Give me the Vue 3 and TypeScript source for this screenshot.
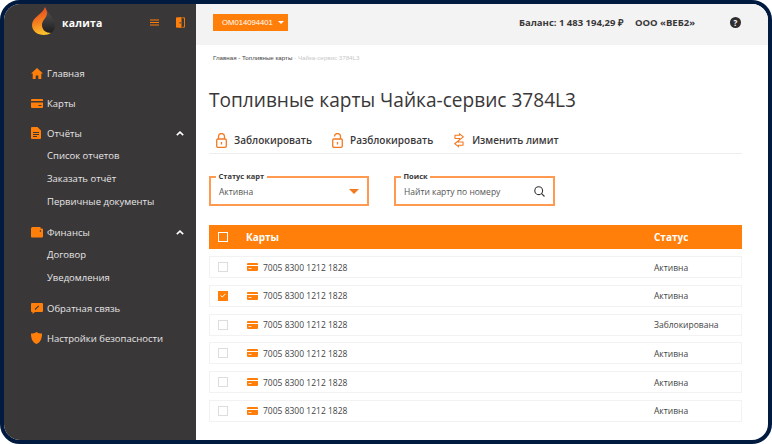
<script setup lang="ts">
interface MenuItem {
    label: string;
    icon: string;
    open?: boolean;
    children?: string[];
}

const menu: MenuItem[] = [
    { label: 'Главная', icon: 'home' },
    { label: 'Карты', icon: 'card' },
    { label: 'Отчёты', icon: 'doc', open: true, children: ['Список отчетов', 'Заказать отчёт', 'Первичные документы'] },
    { label: 'Финансы', icon: 'wallet', open: true, children: ['Договор', 'Уведомления'] },
    { label: 'Обратная связь', icon: 'chat' },
    { label: 'Настройки безопасности', icon: 'shield' },
];

const rows = [
    { status: 'Активна', checked: false },
    { status: 'Активна', checked: true },
    { status: 'Заблокирована', checked: false },
    { status: 'Активна', checked: false },
    { status: 'Активна', checked: false },
    { status: 'Активна', checked: false },
];
</script>

<template>
    <div class="frame">
        <aside class="sidebar">
            <div class="brand">
                <svg class="flame" width="24" height="28" viewBox="0 0 24 28">
                    <defs>
                        <linearGradient id="fl" x1="0.3" y1="0" x2="0.5" y2="1">
                            <stop offset="0" stop-color="#e8401c" />
                            <stop offset="0.55" stop-color="#f58220" />
                            <stop offset="1" stop-color="#fdc52c" />
                        </linearGradient>
                        <linearGradient id="fd" x1="0.5" y1="0" x2="0.5" y2="1">
                            <stop offset="0" stop-color="#5a5758" />
                            <stop offset="1" stop-color="#1c1a1b" />
                        </linearGradient>
                    </defs>
                    <path d="M13 0C14 5 23 10 23 19C23 24 18 28 12 28C5 28 0 24 0 18C0 10 11 7 13 0Z" fill="url(#fd)" />
                    <path d="M13 0C11 7 0 10 0 18C0 24 5 28 12 28C15 28 17 27 19 26C14 26 10 23 10 18C10 13 15 11 15 6C15 4 14 2 13 0Z" fill="url(#fl)" />
                </svg>
                <span class="brand-name">калита</span>
                <svg class="burger" width="9" height="7" viewBox="0 0 9 7"><path d="M0 1h9M0 3.500h9M0 6h9" stroke="#ff7f0a" stroke-width="1" /></svg>
                <svg class="door" width="9" height="11" viewBox="0 0 9 11">
                    <path d="M0 0.500 5.500 0V11L0 10.500Z" fill="#ff7f0a" />
                    <path d="M6.300 0.800H8.500V10.200H6.300" fill="none" stroke="#ff7f0a" stroke-width="0.900" />
                    <rect x="3.600" y="5" width="1" height="1.600" fill="#3a3739" />
                </svg>
            </div>

            <nav class="menu">
                <div v-for="item in menu" :key="item.label" class="menu-group">
                    <div class="menu-item">
                        <span class="menu-icon">
                            <svg v-if="item.icon === 'home'" width="12" height="11" viewBox="0 0 12 11"><path d="M6 0 12 5.500H10.300V11H7.300V7.500H4.700V11H1.700V5.500H0Z" fill="#ff7f0a" /></svg>
                            <svg v-else-if="item.icon === 'card'" width="12" height="9" viewBox="0 0 12 9"><path d="M1 0H11A1 1 0 0 1 12 1V2H0V1A1 1 0 0 1 1 0ZM0 3.500H12V8A1 1 0 0 1 11 9H1A1 1 0 0 1 0 8ZM7.500 6V7H10.500V6Z" fill="#ff7f0a" fill-rule="evenodd" /></svg>
                            <svg v-else-if="item.icon === 'doc'" width="10" height="12" viewBox="0 0 10 12"><path d="M1 0H6.500L10 3.500V11A1 1 0 0 1 9 12H1A1 1 0 0 1 0 11V1A1 1 0 0 1 1 0ZM2 5V6H8V5ZM2 7V8H8V7ZM2 9V10H6V9Z" fill="#ff7f0a" fill-rule="evenodd" /></svg>
                            <svg v-else-if="item.icon === 'wallet'" width="12" height="11" viewBox="0 0 12 11"><path d="M1.500 0H9.500V1.500H11A1 1 0 0 1 12 2.500V9.500A1 1 0 0 1 11 10.500H1A1 1 0 0 1 0 9.500V1.500A1.500 1.500 0 0 1 1.500 0ZM8.800 3.200V4.800H10V3.200Z" fill="#ff7f0a" fill-rule="evenodd" /></svg>
                            <svg v-else-if="item.icon === 'chat'" width="12" height="11" viewBox="0 0 12 11"><path d="M1 0H11A1 1 0 0 1 12 1V8A1 1 0 0 1 11 9H4L1.500 11V9H1A1 1 0 0 1 0 8V1A1 1 0 0 1 1 0Z" fill="#ff7f0a" /><path d="M4 6.500 7.800 2.800" stroke="#3a3739" stroke-width="1.100" /></svg>
                            <svg v-else width="11" height="12" viewBox="0 0 11 12"><path d="M5.500 0C7 1 9 1.500 11 1.500C11 6 10 10 5.500 12C1 10 0 6 0 1.500C2 1.500 4 1 5.500 0Z" fill="#ff7f0a" /></svg>
                        </span>
                        <span class="menu-label">{{ item.label }}</span>
                        <svg v-if="item.open" class="chevron" width="8" height="5" viewBox="0 0 8 5"><path d="M0.800 4.200 4 1.200 7.200 4.200" fill="none" stroke="#fff" stroke-width="1.600" /></svg>
                    </div>
                    <div v-for="child in item.children" :key="child" class="submenu-item">{{ child }}</div>
                </div>
            </nav>
        </aside>

        <div class="content">
            <header class="topbar">
                <button class="contract">OM014094401<i class="caret"></i></button>
                <div class="balance">Баланс: 1 483 194,29 ₽</div>
                <div class="company">ООО «ВЕБ2»</div>
                <span class="help">?</span>
            </header>

            <main class="page">
                <div class="crumbs">Главная - Топливные карты <span>- Чайка-сервис 3784L3</span></div>
                <h1 class="title">Топливные карты Чайка-сервис 3784L3</h1>

                <div class="actions">
                    <div class="action">
                        <svg width="11" height="15" viewBox="0 0 11 15" fill="none" stroke="#f47a20" stroke-width="1.300">
                            <path d="M2.500 6V3.500A3 3 0 0 1 8.500 3.500V6" />
                            <rect x="0.700" y="6" width="9.600" height="8.300" rx="1.300" />
                            <path d="M5.500 9V11.500" />
                        </svg>
                        Заблокировать
                    </div>
                    <div class="action">
                        <svg width="11" height="15" viewBox="0 0 11 15" fill="none" stroke="#f47a20" stroke-width="1.300">
                            <path d="M2.500 3.500A3 3 0 0 1 8.500 3.500V6" />
                            <rect x="0.700" y="6" width="9.600" height="8.300" rx="1.300" />
                            <path d="M5.500 9V11.500" />
                        </svg>
                        Разблокировать
                    </div>
                    <div class="action action-limit">
                        <svg width="10" height="15" viewBox="0 0 10 15" fill="none" stroke="#f47a20" stroke-width="1.100">
                            <path d="M1 2.200H5.500V0.900L9.300 3.900 5.500 6.900V5.500H1Z" />
                            <path d="M9 9H4.500V7.700L0.700 10.700 4.500 13.700V12.300H9Z" />
                        </svg>
                        Изменить лимит
                    </div>
                </div>

                <div class="filters">
                    <fieldset class="field field-status">
                        <legend>Статус карт</legend>
                        <span>Активна</span>
                        <i class="field-caret"></i>
                    </fieldset>
                    <fieldset class="field field-search">
                        <legend>Поиск</legend>
                        <span>Найти карту по номеру</span>
                        <svg width="11" height="11" viewBox="0 0 11 11" fill="none" stroke="#333" stroke-width="1.100"><circle cx="4.700" cy="4.700" r="3.900" /><path d="M7.600 7.600 10.500 10.500" /></svg>
                    </fieldset>
                </div>

                <div class="table-head">
                    <span class="head-check"></span>
                    <span class="col-card">Карты</span>
                    <span class="col-status">Статус</span>
                </div>
                <div class="table-body">
                    <div v-for="(row, i) in rows" :key="i" class="row">
                        <span class="check" :class="{ checked: row.checked }">
                            <svg v-if="row.checked" width="6" height="5" viewBox="0 0 6 5"><path d="M0.600 2.600 2.300 4 5.400 0.800" fill="none" stroke="#fff" stroke-width="1" /></svg>
                        </span>
                        <svg class="row-card" width="11" height="8" viewBox="0 0 11 8"><path d="M1 0H10A1 1 0 0 1 11 1V2H0V1A1 1 0 0 1 1 0ZM0 3H11V7A1 1 0 0 1 10 8H1A1 1 0 0 1 0 7ZM1.500 5.200V6H4.500V5.200Z" fill="#ff7f0a" fill-rule="evenodd" /></svg>
                        <span class="number">7005 8300 1212 1828</span>
                        <span class="row-status">{{ row.status }}</span>
                    </div>
                </div>
            </main>
        </div>
    </div>
</template>

<style>
html,
body {
    margin: 0;
    background: #fff;
}
</style>

<style scoped>
.frame {
    box-sizing: border-box;
    width: 772px;
    height: 444px;
    display: flex;
    border: 4px solid #001a40;
    border-radius: 20px;
    overflow: hidden;
    background: #fff;
    font-family: "Open Sans", sans-serif;
}

.sidebar {
    width: 192px;
    flex-shrink: 0;
    background: #3a3739;
    color: #e6e6e6;
}

.brand {
    box-sizing: border-box;
    height: 34px;
    display: flex;
    align-items: center;
    padding: 0 11px 0 28px;
}

.flame {
    flex-shrink: 0;
}

.brand-name {
    margin: 4px 0 0 6px;
    font-size: 10.500px;
    font-weight: 700;
    letter-spacing: 0.2px;
    color: #fff;
}

.burger {
    margin: 2px 0 0 auto;
}

.door {
    margin: 2px 0 0 17px;
}

.menu {
    padding-top: 27px;
}

.menu-group {
    margin-bottom: 14px;
}

.menu-item {
    height: 16px;
    display: flex;
    align-items: center;
    padding: 0 12px 0 27px;
    font-size: 9.500px;
}

.menu-icon {
    width: 16px;
    display: flex;
    align-items: center;
}

.menu-label {
    flex: 1;
}

.chevron {
    flex-shrink: 0;
}

.submenu-item {
    height: 16px;
    margin-top: 7px;
    padding-left: 43px;
    font-size: 9.500px;
    line-height: 16px;
}

.content {
    flex: 1;
    min-width: 0;
    display: flex;
    flex-direction: column;
}

.topbar {
    box-sizing: border-box;
    height: 41px;
    flex-shrink: 0;
    display: flex;
    align-items: center;
    background: #f3f3f3;
    padding: 0 27px 4px 17px;
    font-size: 9.500px;
    font-weight: 700;
    color: #3a3739;
}

.contract {
    width: 75px;
    height: 17px;
    display: flex;
    align-items: center;
    padding: 0 0 0 9px;
    border: 0;
    background: #ff7f0a;
    color: #fff;
    font-family: "Liberation Sans", sans-serif;
    font-size: 7.700px;
    white-space: nowrap;
}

.caret {
    margin-left: 5px;
    border: 3px solid transparent;
    border-top: 3.500px solid #fff;
    border-bottom: 0;
}

.balance {
    margin-left: auto;
}

.company {
    margin-left: 11px;
}

.help {
    width: 11px;
    height: 11px;
    margin-left: 35px;
    border-radius: 50%;
    background: #2f2d2e;
    color: #fff;
    font-size: 8px;
    line-height: 11px;
    text-align: center;
}

.page {
    flex: 1;
    padding: 8px 26px 0 13px;
    color: #3a3739;
}

.crumbs {
    padding-left: 4px;
    font-size: 6.200px;
    line-height: 10px;
    font-family: "Liberation Sans", sans-serif;
    color: #444;
}

.crumbs span {
    color: #c8c8c8;
}

.title {
    margin: 23px 0 0;
    font-size: 19.100px;
    line-height: 28px;
    font-weight: 400;
    color: #3a3739;
}

.actions {
    box-sizing: border-box;
    height: 26px;
    margin-top: 14px;
    display: flex;
    align-items: flex-start;
    gap: 20px;
    padding: 4px 0 0 7px;
    border-bottom: 1px solid #eee;
}

.action {
    display: flex;
    align-items: center;
    gap: 7px;
    font-size: 10px;
    font-weight: 600;
    line-height: 17px;
}

.action-limit {
    margin-left: 1px;
    gap: 8px;
}

.filters {
    display: flex;
    gap: 25px;
    margin-top: 18px;
}

.field {
    box-sizing: border-box;
    height: 34px;
    margin: 0;
    padding: 0 8px;
    display: flex;
    align-items: center;
    justify-content: space-between;
    border: 2px solid #ff9a50;
    font-size: 8.500px;
    color: #555;
}

.field legend {
    margin-left: -3px;
    padding: 0 2.500px;
    font-size: 7.500px;
    font-weight: 700;
    line-height: 9px;
    color: #3a3739;
}

.field span {
    margin-top: -3px;
}

.field svg,
.field-caret {
    margin-top: -3px;
}

.field-status {
    width: 160px;
}

.field-search {
    width: 161px;
}

.field-caret {
    border: 5px solid transparent;
    border-top: 5px solid #f47a20;
    border-bottom: 0;
}

.table-head {
    height: 24px;
    margin-top: 19px;
    display: flex;
    align-items: center;
    padding-left: 9px;
    background: #ff7f0a;
    color: #fff;
    font-size: 10px;
    font-weight: 700;
}

.head-check {
    box-sizing: border-box;
    width: 10px;
    height: 10px;
    border: 1.500px solid #fff;
}

.col-card {
    margin-left: 18px;
}

.col-status {
    margin-left: auto;
    width: 88px;
}

.table-body {
    display: flex;
    flex-direction: column;
    gap: 6.800px;
    margin-top: 7px;
}

.row {
    box-sizing: border-box;
    height: 22px;
    display: flex;
    align-items: center;
    padding-left: 9px;
    border: 1px solid #f2f2f2;
    font-size: 8.500px;
    color: #444;
}

.check {
    box-sizing: border-box;
    width: 10px;
    height: 10px;
    margin-left: -1px;
    display: flex;
    align-items: center;
    justify-content: center;
    border: 1px solid #ddd;
}

.check.checked {
    border-color: #ff7f0a;
    background: #ff7f0a;
}

.row-card {
    margin-left: 19px;
}

.number {
    margin-left: 5px;
}

.row-status {
    margin-left: auto;
    width: 87px;
}
</style>
